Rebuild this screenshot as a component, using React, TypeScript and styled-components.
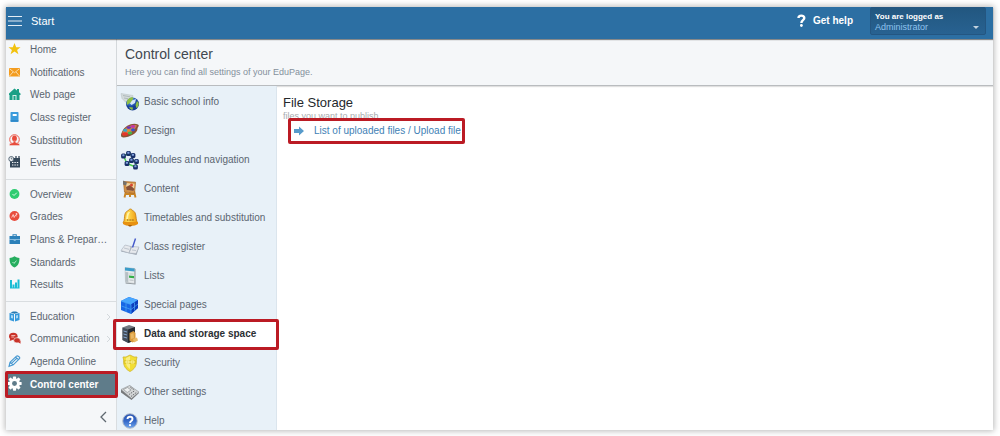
import React from "react";
import styled, { createGlobalStyle, css } from "styled-components";

const GlobalStyle = createGlobalStyle`
  *, *::before, *::after { box-sizing: border-box; }
  body {
    margin: 0;
    background: #fff;
    font-family: "Liberation Sans", Arial, sans-serif;
    font-size: 10px;
    line-height: 12px;
    color: #5b6570;
  }
  ul { list-style: none; margin: 0; padding: 0; }
  h1, h2, p { margin: 0; font-weight: normal; }
  button { font: inherit; color: inherit; background: none; border: 0; padding: 0; cursor: pointer; }
  a { color: inherit; text-decoration: none; }
`;

const marked = css`
  position: relative;
  &::after {
    content: "";
    position: absolute;
    inset: var(--mark-inset);
    border: 3px solid #bb1b24;
    border-radius: 2px;
    pointer-events: none;
    z-index: 2;
  }
`;

const Page = styled.div`
  min-height: 100vh;
  padding: 7px 7px 6px 6px;
  display: flex;
`;

const Frame = styled.div`
  flex: 1;
  min-width: 0;
  display: flex;
  flex-direction: column;
  background: #fff;
  box-shadow: 0 0 6px 1px rgba(0, 0, 0, 0.28);
`;

const TopBar = styled.header`
  display: flex;
  align-items: stretch;
  height: 32px;
  background: #2c6fa3;
  color: #fff;
  box-shadow: 0 1px 1px rgba(0, 0, 0, 0.45);
  position: relative;
  z-index: 1;
`;

const StartButton = styled.button`
  display: flex;
  align-items: center;
  gap: 8px;
  padding: 0 2px 5px;
  font-size: 11px;
`;

const HelpButton = styled.button`
  display: flex;
  align-items: center;
  gap: 7px;
  margin-left: auto;
  padding-bottom: 5px;
  font-weight: bold;
`;

const UserButton = styled.button`
  display: flex;
  align-items: flex-end;
  justify-content: space-between;
  width: 116px;
  height: 28px;
  margin: 0 7px 0 17px;
  padding: 2px 6px 1px 4px;
  background: linear-gradient(#225780, #286291);
  border: 1px solid #245681;
  border-radius: 2px;
  text-align: left;
  font-size: 9px;
  line-height: 11px;
`;

const UserCaption = styled.strong`
  display: block;
  font-size: 8px;
`;

const UserName = styled.span`
  display: block;
  color: #8fc3ee;
`;

const Body = styled.div`
  flex: 1;
  display: flex;
`;

const Sidebar = styled.nav`
  flex: none;
  width: 111px;
  display: flex;
  flex-direction: column;
  background: #f5f7f9;
  border-right: 1px solid #d9dde0;
`;

const NavGroup = styled.ul<{ $rows: number }>`
  flex: ${(p) => p.$rows} 0 auto;
  display: grid;
  grid-auto-rows: 1fr;
  & + & {
    margin-top: 4px;
    padding-top: 4px;
    border-top: 1px solid #d9dde0;
  }
`;

const NavItem = styled.li<{ $active?: boolean }>`
  display: flex;
  min-height: 22px;
  ${(p) =>
    p.$active &&
    css`
      --mark-inset: -2px -2px -2px -1px;
      background: #5f7c8a;
      color: #fff;
      font-weight: bold;
      ${marked}
    `}
`;

const NavLink = styled.a`
  flex: 1;
  min-width: 0;
  display: flex;
  align-items: center;
  padding: 0 5px 0 1px;
  > svg { flex: none; }
  > svg:first-child { margin-top: -2px; }
`;

const NavLabel = styled.span`
  flex: 1;
  min-width: 0;
  margin-left: 8px;
  white-space: nowrap;
`;

const CollapseButton = styled.button`
  flex: none;
  height: 34px;
  padding: 0 9px 7px 0;
  display: flex;
  align-items: flex-end;
  justify-content: flex-end;
`;

const Main = styled.main`
  flex: 1;
  min-width: 0;
  display: flex;
  flex-direction: column;
`;

const PageHead = styled.div`
  height: 47px;
  padding: 7px 8px 0;
  background: #f5f7f9;
  border-bottom: 1px solid #b9bcbf;
  box-shadow: 0 1px 1px rgba(0, 0, 0, 0.12);
`;

const PageTitle = styled.h1`
  font-size: 14px;
  line-height: 17px;
  color: #414850;
`;

const PageNote = styled.p`
  margin-top: 3px;
  font-size: 9px;
  color: #84909c;
`;

const Columns = styled.div`
  flex: 1;
  display: flex;
`;

const Sections = styled.ul`
  flex: none;
  width: 160px;
  padding-top: 2px;
  background: #e8f1f8;
  border-right: 1px solid #dbe5ed;
`;

const Section = styled.li<{ $active?: boolean }>`
  height: 29px;
  &:last-child { height: 23px; }
  ${(p) =>
    p.$active &&
    css`
      --mark-inset: -1px -3px -1px -4px;
      background: #fff;
      color: #2b2f33;
      font-weight: bold;
      ${marked}
    `}
`;

const SectionLink = styled.a`
  display: flex;
  align-items: center;
  gap: 4px;
  height: 28px;
  padding-left: 3px;
  white-space: nowrap;
`;

const Content = styled.section`
  flex: 1;
  padding: 9px 6px;
`;

const ContentTitle = styled.h2`
  font-size: 13px;
  line-height: 16px;
  color: #24282c;
`;

const ContentNote = styled.p`
  font-size: 9px;
  line-height: 10px;
  color: #a9acaf;
`;

const FileLink = styled.a`
  display: inline-flex;
  align-items: center;
  gap: 10px;
  height: 26px;
  margin: -3px 0 0 5px;
  padding: 0 4px 0 6px;
  background: #fff;
  color: #4181b5;
  --mark-inset: 0;
  ${marked}
`;

const navIcons: Record<string, React.ReactNode> = {
  star: <path fill="#f2c20f" d="M7.500 1l1.700 4.200h4.300L10.100 8l1.300 4.300-3.900-2.700-3.900 2.700L4.900 8 1.500 5.200h4.300z" />,
  mail: <><path fill="#f39c1f" d="M2 3h11v8.500H2z" /><path fill="none" stroke="#fbe0b4" strokeWidth=".9" d="M2.500 3.700l5 4 5-4M2.500 11L6 7M12.500 11L9 7" /></>,
  home: <><path fill="#1aa086" d="M2 6.500l5.500-5 2.500 2V2h2v3.200l1.500 1.300V8h-1v5h-10V8H2z" /><path fill="#d6f0ea" d="M5.500 13V8h4v5h-1V9h-2v4z" /></>,
  book: <><rect x="3.500" y="2" width="8" height="10" rx=".7" fill="#3b9bdc" /><path fill="#fff" d="M5.700 4h4v2h-4z" /><path fill="#2576b3" d="M3.500 10.500h8v.8h-8z" /></>,
  person: <><circle cx="7.500" cy="6.500" r="4.800" fill="none" stroke="#ec594b" /><ellipse cx="7.500" cy="5.600" rx="2.400" ry="3" fill="#e74c3c" /><path fill="#e74c3c" stroke="#f5f7f9" strokeWidth=".4" d="M6.300 8h2.400v1.500l3.800 1.300v1.700h-10v-1.700l3.800-1.300z" /></>,
  calendar: <><path fill="#344759" d="M3 3h10v9.500H3z" /><path stroke="#f5f7f9" strokeWidth="1.100" strokeDasharray="1.400 1" d="M5 7.500h7M5 10h7" /><path stroke="#344759" strokeWidth="1.300" d="M9 1v3M12 1v3" /><circle cx="4.300" cy="4" r="2.500" fill="#f5f7f9" stroke="#344759" strokeWidth=".8" /><path fill="none" stroke="#344759" strokeWidth=".7" d="M4.300 2.500V4h1.200" /></>,
  check: <><circle cx="7.500" cy="7" r="4.900" fill="#2ecc71" /><path fill="none" stroke="#d9fae6" d="M5.500 7L7 8.500l2.800-2.800" /></>,
  grade: <><circle cx="7.500" cy="7" r="5" fill="#e84c3d" /><path fill="none" stroke="#ffd5d1" strokeWidth=".9" d="M4.700 8.500l1.500-3 1 3 1.400-2.500 1 1.300M9.500 4v2M8.500 5h2" /></>,
  case: <><path fill="#2b80b9" d="M2.500 4h10.500v3.400H2.500zM2.500 8h10.500v4H2.500zM5.500 2.300h4.300V4h-1v-.7H6.500V4h-1z" /><path fill="#83bbdf" d="M2.500 7.300H6V8H2.500zM9.300 7.300H13V8H9.300zM6.700 7h2v2h-2z" /></>,
  shield: <><path fill="#27ae60" d="M7.500 1.300c2 1.400 3 1.600 4.900 1.600 0 4.300-.5 7.200-4.900 9.700-4.400-2.500-4.900-5.400-4.900-9.700 1.900 0 2.900-.2 4.900-1.600z" /><path fill="none" stroke="#bdf1d2" d="M5.500 7l1.400 1.400 2.600-2.600" /></>,
  bars: <path fill="#19bdd4" d="M3 3h2v8.500H3zM5.500 7.500h2v4h-2zM8 5.500h2v6H8zM10.500 2.500h2v9h-2zM3 10.500h9.500v1H3z" />,
  learn: <><path fill="#3498db" d="M2.500 4l4.500 1v7.500L2.500 11zM12.500 4L8 5v7.500l4.500-1.500z" /><path fill="#2479b2" d="M3.500 3.500C5.500 2 9.500 2 11.500 3.500l-4 1.300z" /><path fill="#a9d7f3" d="M4 6l2 .5v3L4 9zM11 6l-2 .5v3l2-.5z" /></>,
  chat: <><ellipse cx="6.300" cy="5.300" rx="4.300" ry="3.600" fill="#c93329" /><ellipse cx="10" cy="9.300" rx="3.300" ry="2.600" fill="#c93329" stroke="#f5f7f9" strokeWidth=".6" /><path fill="#c93329" d="M2.500 10l1-3 2 2zM11 11l2.500 1.800V9.800z" /><path stroke="#ffd4cf" strokeWidth=".8" d="M4.300 4.500h4M4.300 6h3" /></>,
  pen: <path fill="none" stroke="#4598d1" strokeWidth="1.100" d="M2 12.300l1-4 6.500-6.200c1-.8 3.900 1 3.200 2.400L6.300 10.800zM3 8.300l3.300 2.500M4.500 9.300l5.700-5.500M8.500 3.200l3.200 2.600" />,
};

function NavIcon({ name }: { name: string }) {
  return <svg width="15" height="14" viewBox="0 0 15 14" aria-hidden="true">{navIcons[name]}</svg>;
}

function Gear() {
  return (
    <svg width="15" height="15" viewBox="0 0 16 16" aria-hidden="true">
      <g fill="#fff">
        {[0, 45, 90, 135].map((a) => (
          <rect key={a} x="6.300" y=".4" width="3.400" height="15.200" rx=".7" transform={`rotate(${a} 8 8)`} />
        ))}
        <circle cx="8" cy="8" r="5.700" />
      </g>
      <circle cx="8" cy="8" r="2.600" fill="#5f7c8a" />
    </svg>
  );
}

const moduleNodes = [[3.5, 6], [8.5, 3.5], [13, 5.5], [11.500, 10.500], [7, 13.500], [16.500, 11.500], [15.500, 17]];

const sectionIcons: Record<string, React.ReactNode> = {
  globe: <><path fill="#d3dadb" stroke="#b5bfc2" strokeWidth=".5" d="M1 1.500l12 2-1 5-6 2-4-4z" /><path stroke="#9eabad" strokeWidth=".7" d="M3 3.500l7 1.300M4 6l4 .7" /><circle cx="12.500" cy="12" r="6.500" fill="url(#blueBall)" /><path fill="#8fbf45" d="M7.500 8c2-3 5-3.500 6-2l-2 4-4.500 3c-.5-2-.3-3.500.5-5zM9 15l4 .5-.5 2.500c-1.500-.2-2.700-1.200-3.500-3zM17 9l1.700 2c.2 2.500-.7 4-2.200 5.300L15.500 13z" /><path fill="#eef8ff" d="M12 8.500l4-1.500-1 4-3.500 2-1.500-1.500z" opacity=".85" /></>,
  palette: <><path fill="#8d5334" d="M2 11C5 4 13 1.500 18 3.500c2 1-.5 2.500-.5 4.500 0 4-8 8.500-14 8.500-3 0-3-3-1.500-5.500z" /><path fill="#c98552" d="M3 10.500C6 5 13 3 17 4.500c-2 4-5 7.500-14 10-1-1-1-2.500 0-4z" /><ellipse cx="5" cy="13" rx="3" ry="1.800" fill="#e63529" /><ellipse cx="5.300" cy="9.300" rx="2" ry="1.500" fill="#36a9c9" /><ellipse cx="8.800" cy="6.600" rx="2.200" ry="1.400" fill="#6a35b9" /><ellipse cx="13" cy="5.500" rx="2.200" ry="1.400" fill="#c336a8" /><ellipse cx="10" cy="12" rx="2.200" ry="1.600" fill="#45b64a" /><ellipse cx="13" cy="8.800" rx="2" ry="1.500" fill="#3853cf" /><ellipse cx="8.500" cy="9.500" rx="1.500" ry="1" fill="#f08a2b" /></>,
  modules: <><path fill="none" stroke="#4bd04b" strokeWidth="1.500" d="M3.500 6l5-2.500L13 5.500l-1.500 5 5 1M3.500 6L7 13.500l4.500-3M7 13.500l8.500 3.500 1-5.500" />{moduleNodes.map(([x, y]) => <g key={`${x}-${y}`}><rect x={x - 2.400} y={y - 2.400} width="4.800" height="4.800" rx="1.500" fill="#182f68" /><rect x={x - 1.200} y={y - 1.700} width="2.200" height="2" rx=".6" fill="#7fa0da" /></g>)}</>,
  easel: <><path stroke="#c98424" strokeWidth="1.900" d="M6 12l-1.500 6.500M14 12l1.500 6.500M10 13v5M5 15h10" /><path fill="#d29145" stroke="#aa6724" strokeWidth=".7" d="M3.500 2.500l12 .7-1 11.300-10-1.500z" /><path fill="#f0d3a0" d="M6 4l8.500.8L14 12l-7.500-1z" /><path fill="#875138" d="M6 8l4-2 4.500 4-1 2-7-1z" /><circle cx="11.500" cy="6" r="1.500" fill="#d74731" /><path fill="#75726c" d="M3 1.500l4 2-1 3-3-1z" /></>,
  bell: <><path fill="url(#gold)" stroke="#c27c13" strokeWidth=".8" d="M3 15c2-3 1-6 2-9 .6-2 2-3 3.500-3.500C9 .5 12 .5 12.200 2.500 14 3 15 4 15.500 6c.8 3 .5 6 2 9z" /><path fill="#e79110" d="M3 14h15v2c-3 2.500-12 2.500-15 0z" /><path fill="#fff4a8" d="M7 6c1-2 2-2 3-2-2 3-2 6-2 7H6z" /><path stroke="#874d08" strokeDasharray="1 .6" d="M7 12h7" /><path fill="#a95b0b" d="M8 17h4l-1 1.500H9z" /></>,
  register: <><path fill="#9ea7b3" d="M1 14.500l4-6 14 2-2.500 7.500z" /><path fill="#e6e9ed" stroke="#aab2bd" strokeWidth=".6" d="M1 13.500L5 8l6 1.500L9 16zM9 16l3-6.500 7 .5-3 6.500z" /><path stroke="#b3bbc5" strokeWidth=".8" d="M4 11l5 1.300M12 13l4 .5" /><path stroke="#4358ca" strokeWidth="1.400" d="M15.500 1.500l-3 9" /></>,
  lists: <><path fill="#8c9398" d="M5.500 17.500l10 1V3l-2-1z" /><path fill="#e6eaec" stroke="#abb2b7" strokeWidth=".5" d="M5 1.500l9.500 1v15l-9-1z" /><path fill="#3a9cc9" d="M5 1.500l9.500 1v3L5 4.500z" /><path fill="#b5bfc4" d="M5.300 6l3 .3V16l-3-.3z" /><path fill="#35b048" d="M9 9.500l5 .5v2.200l-5-.4z" /><path stroke="#b0b7bc" strokeWidth=".8" d="M9.500 8h4M9.500 14l4 .4" /></>,
  cube: <><path fill="#1766e5" d="M1 6l8-4 9 3v8l-7 6-10-4z" /><path fill="#46a6ff" d="M1 6l8-4 9 3-7 4.500z" /><path fill="#0d3dbd" d="M11 9.500L18 5v8l-7 6z" /><path fill="none" stroke="#4aa8f5" strokeWidth=".7" d="M1 6l10 3.500V19M1.500 11l9.500 3.500L18 9M6 8v9M5 4.200l9 3M14.500 7.500v8" /></>,
  server: <><path fill="#747b82" d="M2.500 3.500l6.500-2.500 6 2v13l-6 3-6.500-3z" /><path fill="#252a30" d="M8 5.500l7-2.500v13l-7 3z" /><path fill="#444e5a" d="M2.500 3.500l5.500 2V19l-5.500-3z" /><path stroke="#87a8d1" strokeWidth="1" d="M3.500 7l3.500 1M3.500 10l3.500 1M3.500 13l3.500 1" /><path fill="#d99b3c" d="M9.500 9l4-2 2 2v8l-3 1.500-3-2z" /><path fill="#e9b865" d="M10.500 10l3-1 .5 5-3 1zM13 15l4-1.500 1 3-4 2z" /></>,
  guard: <><path fill="#f2de35" stroke="#cfb62a" strokeWidth=".8" d="M3 4l3 0 4-2 4 2h3l-.7 3c.7 6-2.300 9.500-6.300 11.500C6 16.500 3 13 3.700 7z" /><path fill="#fbf39b" d="M6 5l4-2v13c-3-2-5-5-4-11z" opacity=".75" /><path fill="#d9be20" d="M4 7h12v4H4z" opacity=".65" /><path fill="none" stroke="#fff8a8" strokeWidth=".9" d="M6 8h3v2H6zM11 8h3v2h-3z" /></>,
  device: <><path fill="#77797b" d="M1 8l9-4.500 9 7.500-7.500 7L1 10.500z" /><path fill="#d3d5d6" stroke="#808487" strokeWidth=".5" d="M1 7.500L9.500 3.500l9.500 6.500-7.500 6.500z" /><path fill="#eceeee" stroke="#70777b" strokeWidth=".5" d="M3.500 7.500l4-2 3.500 2.500-3.700 2.500z" /><path stroke="#6c7073" strokeWidth="1" strokeDasharray="1.400 1" d="M9 12.500l6-4M11 14.500l6-4.500M10.500 5.500l4 2.500" /></>,
  help: <><circle cx="10" cy="10" r="7.300" fill="url(#helpBall)" stroke="#b4bfce" /><path fill="none" stroke="#fff" strokeWidth="1.900" d="M7.500 8c.2-3 5-3 5 0 0 2-2.500 1.800-2.500 4" /><circle cx="10" cy="14.200" r="1.100" fill="#fff" /></>,
};

function SectionIcon({ name }: { name: string }) {
  return <svg width="20" height="20" viewBox="0 0 20 20" aria-hidden="true">{sectionIcons[name]}</svg>;
}

function Gradients() {
  return (
    <svg width="0" height="0" style={{ position: "absolute" }} aria-hidden="true">
      <defs>
        <radialGradient id="blueBall" cx=".35" cy=".25">
          <stop offset="0" stopColor="#8db9ed" />
          <stop offset=".6" stopColor="#326cc9" />
          <stop offset="1" stopColor="#173e92" />
        </radialGradient>
        <linearGradient id="helpBall" x2="0" y2="1">
          <stop offset="0" stopColor="#2c55b0" />
          <stop offset=".5" stopColor="#3468c8" />
          <stop offset="1" stopColor="#6fa6ec" />
        </linearGradient>
        <linearGradient id="gold">
          <stop offset="0" stopColor="#f4ac20" />
          <stop offset=".35" stopColor="#ffdb52" />
          <stop offset="1" stopColor="#ed970d" />
        </linearGradient>
      </defs>
    </svg>
  );
}

type Entry = { label: string; icon: string; more?: boolean; active?: boolean };

const navGroups: Entry[][] = [
  [
    { label: "Home", icon: "star" },
    { label: "Notifications", icon: "mail" },
    { label: "Web page", icon: "home" },
    { label: "Class register", icon: "book" },
    { label: "Substitution", icon: "person" },
    { label: "Events", icon: "calendar" },
  ],
  [
    { label: "Overview", icon: "check" },
    { label: "Grades", icon: "grade" },
    { label: "Plans & Prepar…", icon: "case" },
    { label: "Standards", icon: "shield" },
    { label: "Results", icon: "bars" },
  ],
  [
    { label: "Education", icon: "learn", more: true },
    { label: "Communication", icon: "chat", more: true },
    { label: "Agenda Online", icon: "pen" },
    { label: "Control center", icon: "gear", active: true },
  ],
];

const sections: Entry[] = [
  { label: "Basic school info", icon: "globe" },
  { label: "Design", icon: "palette" },
  { label: "Modules and navigation", icon: "modules" },
  { label: "Content", icon: "easel" },
  { label: "Timetables and substitution", icon: "bell" },
  { label: "Class register", icon: "register" },
  { label: "Lists", icon: "lists" },
  { label: "Special pages", icon: "cube" },
  { label: "Data and storage space", icon: "server", active: true },
  { label: "Security", icon: "guard" },
  { label: "Other settings", icon: "device" },
  { label: "Help", icon: "help" },
];

export default function App() {
  return (
    <Page>
      <GlobalStyle />
      <Gradients />
      <Frame>
        <TopBar>
          <StartButton>
            <svg width="15" height="12" viewBox="0 0 15 12" aria-hidden="true">
              <path stroke="#e3edf5" strokeWidth="1.200" d="M0 1.500h14M0 6h14M0 10.500h14" />
            </svg>
            Start
          </StartButton>
          <HelpButton>
            <svg width="9" height="13" viewBox="0 0 9 13" aria-hidden="true">
              <path fill="none" stroke="#fff" strokeWidth="2.400" d="M1.500 4C1.500.8 7.300.8 7.300 4c0 2.300-2.900 2-2.900 5" />
              <circle cx="4.400" cy="11.500" r="1.400" fill="#fff" />
            </svg>
            Get help
          </HelpButton>
          <UserButton>
            <span>
              <UserCaption>You are logged as</UserCaption>
              <UserName>Administrator</UserName>
            </span>
            <svg width="6" height="9" viewBox="0 0 6 9" aria-hidden="true">
              <path fill="#c3d3df" d="M0 2h6L3 5z" />
            </svg>
          </UserButton>
        </TopBar>
        <Body>
          <Sidebar>
            {navGroups.map((group) => (
              <NavGroup key={group[0].label} $rows={group.length}>
                {group.map((item) => (
                  <NavItem key={item.label} $active={item.active}>
                    <NavLink href="#">
                      {item.icon === "gear" ? <Gear /> : <NavIcon name={item.icon} />}
                      <NavLabel>{item.label}</NavLabel>
                      {item.more && (
                        <svg width="5" height="8" viewBox="0 0 5 8" aria-hidden="true">
                          <path fill="none" stroke="#d3d8dc" d="M1 1l3 3-3 3" />
                        </svg>
                      )}
                    </NavLink>
                  </NavItem>
                ))}
              </NavGroup>
            ))}
            <CollapseButton aria-label="Collapse menu">
              <svg width="7" height="12" viewBox="0 0 7 12" aria-hidden="true">
                <path fill="none" stroke="#5f6870" strokeWidth="1.300" d="M6 1L1 6l5 5" />
              </svg>
            </CollapseButton>
          </Sidebar>
          <Main>
            <PageHead>
              <PageTitle>Control center</PageTitle>
              <PageNote>Here you can find all settings of your EduPage.</PageNote>
            </PageHead>
            <Columns>
              <Sections>
                {sections.map((s) => (
                  <Section key={s.label} $active={s.active}>
                    <SectionLink href="#">
                      <SectionIcon name={s.icon} />
                      {s.label}
                    </SectionLink>
                  </Section>
                ))}
              </Sections>
              <Content>
                <ContentTitle>File Storage</ContentTitle>
                <ContentNote>files you want to publish</ContentNote>
                <FileLink href="#">
                  <svg width="10" height="10" viewBox="0 0 10 10" aria-hidden="true">
                    <path fill="#579bcb" d="M0 3h5V.5L10 5 5 9.500V7H0z" />
                  </svg>
                  List of uploaded files / Upload file
                </FileLink>
              </Content>
            </Columns>
          </Main>
        </Body>
      </Frame>
    </Page>
  );
}
